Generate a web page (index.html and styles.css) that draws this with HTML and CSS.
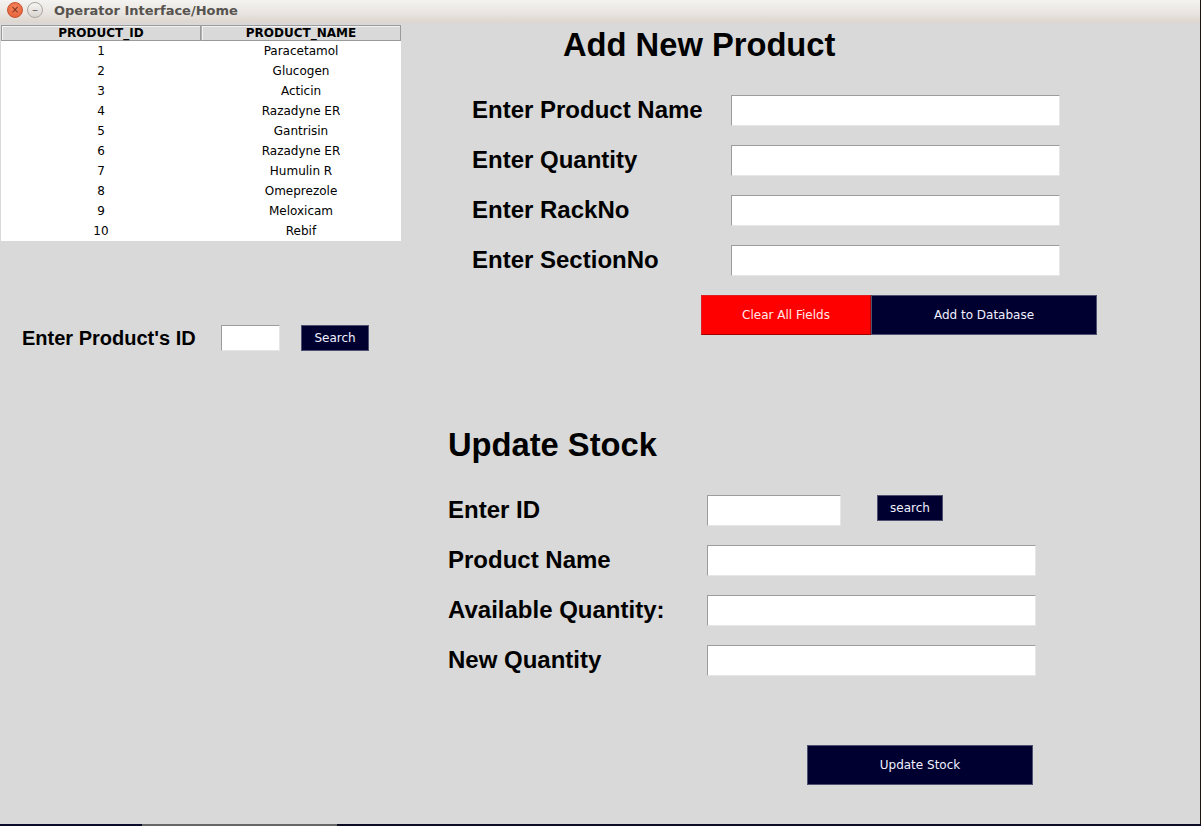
FILE: index.html
```html
<!DOCTYPE html>
<html>
<head>
<meta charset="utf-8">
<title>Operator Interface/Home</title>
<link rel="stylesheet" href="styles.css">
</head>
<body>
<div class="screen">
  <div class="window">
    <div class="titlebar">
      <span class="wbtn wbtn-close">×</span>
      <span class="wbtn wbtn-min">–</span>
      <span class="wtitle">Operator Interface/Home</span>
    </div>
    <div class="main">
      <div class="left">
        <div class="table">
          <div class="thead">
            <div class="th">PRODUCT_ID</div>
            <div class="th">PRODUCT_NAME</div>
          </div>
          <div class="tr"><div class="td">1</div><div class="td">Paracetamol</div></div>
          <div class="tr"><div class="td">2</div><div class="td">Glucogen</div></div>
          <div class="tr"><div class="td">3</div><div class="td">Acticin</div></div>
          <div class="tr"><div class="td">4</div><div class="td">Razadyne ER</div></div>
          <div class="tr"><div class="td">5</div><div class="td">Gantrisin</div></div>
          <div class="tr"><div class="td">6</div><div class="td">Razadyne ER</div></div>
          <div class="tr"><div class="td">7</div><div class="td">Humulin R</div></div>
          <div class="tr"><div class="td">8</div><div class="td">Omeprezole</div></div>
          <div class="tr"><div class="td">9</div><div class="td">Meloxicam</div></div>
          <div class="tr"><div class="td">10</div><div class="td">Rebif</div></div>
        </div>
        <div class="idsearch">
          <span class="label id-label">Enter Product's ID</span>
          <span class="entry entry-id"></span>
          <span class="btn btn-navy btn-search">Search</span>
        </div>
      </div>
      <div class="right">
        <section class="add">
          <h1 class="heading heading-add">Add New Product</h1>
          <div class="form">
            <span class="label">Enter Product Name</span><span class="entry entry-wide"></span>
            <span class="label">Enter Quantity</span><span class="entry entry-wide"></span>
            <span class="label">Enter RackNo</span><span class="entry entry-wide"></span>
            <span class="label">Enter SectionNo</span><span class="entry entry-wide"></span>
          </div>
          <div class="btnrow">
            <span class="btn btn-red btn-clear">Clear All Fields</span>
            <span class="btn btn-navy btn-add">Add to Database</span>
          </div>
        </section>
        <section class="update">
          <h1 class="heading heading-update">Update Stock</h1>
          <div class="form">
            <span class="label">Enter ID</span>
            <span class="idcell"><span class="entry entry-short"></span><span class="btn btn-navy btn-small">search</span></span>
            <span class="label">Product Name</span><span class="entry entry-wide"></span>
            <span class="label">Available Quantity:</span><span class="entry entry-wide"></span>
            <span class="label">New Quantity</span><span class="entry entry-wide"></span>
          </div>
          <div class="btnrow btnrow-update">
            <span class="btn btn-navy btn-update">Update Stock</span>
          </div>
        </section>
      </div>
    </div>
  </div>
  <div class="taskstrip">
    <span class="seg seg-a"></span>
    <span class="seg seg-b"></span>
    <span class="seg seg-c"></span>
  </div>
</div>
</body>
</html>
```

FILE: styles.css
```css
html, body {
  margin: 0;
  padding: 0;
  background: #1b1612;
}
.screen {
  width: 1201px;
  height: 826px;
  overflow: hidden;
  background: #1b1612;
}
.window {
  width: 1200px;
  height: 824px;
  background: #d9d9d9;
  overflow: hidden;
}
.titlebar {
  height: 23px;
  box-sizing: border-box;
  display: flex;
  align-items: center;
  background: linear-gradient(#f4f3f1, #e9e5e1 55%, #ddd5ce);
  padding-left: 7px;
  padding-bottom: 3px;
}
.wbtn {
  width: 16px;
  height: 16px;
  border-radius: 50%;
  box-sizing: border-box;
  display: flex;
  align-items: center;
  justify-content: center;
  font-family: "DejaVu Sans", sans-serif;
  line-height: 1;
}
.wbtn-close {
  background: radial-gradient(circle at 50% 35%, #f6865f, #e35a32);
  border: 1px solid #c7532f;
  color: #7a2c18;
  font-size: 10px;
}
.wbtn-min {
  margin-left: 4px;
  background: linear-gradient(#f7f6f4, #d8d4cf);
  border: 1px solid #a9a49e;
  color: #6a6560;
  font-size: 12px;
}
.wtitle {
  margin-left: 11px;
  font-family: "DejaVu Sans", sans-serif;
  font-weight: bold;
  font-size: 13px;
  color: #57534e;
}
.main {
  display: flex;
}
.left {
  width: 401px;
  flex: none;
}
.table {
  margin-top: 2px;
  margin-left: 1px;
  width: 400px;
  background: #ffffff;
  font-family: "DejaVu Sans", sans-serif;
  font-size: 12px;
  color: #000;
}
.thead {
  display: flex;
  height: 16px;
}
.th {
  width: 200px;
  box-sizing: border-box;
  background: #d9d9d9;
  border: 1px solid #9a9a9a;
  box-shadow: inset 1px 1px 0 #f2f2f2;
  text-align: center;
  font-weight: bold;
  line-height: 14px;
}
.th + .th {
  border-left: 1px solid #b0b0b0;
}
.tr {
  display: flex;
  height: 20px;
  line-height: 20px;
}
.td {
  width: 200px;
  text-align: center;
}
.idsearch {
  margin-top: 84px;
  display: flex;
  align-items: center;
  height: 26px;
  padding-left: 22px;
}
.label {
  font-family: "Liberation Sans", Arial, sans-serif;
  font-weight: bold;
  font-size: 24px;
  color: #000;
}
.id-label {
  font-size: 20px;
  width: 199px;
}
.entry {
  display: block;
  box-sizing: border-box;
  background: #fff;
  border-top: 1px solid #9c9c9c;
  border-left: 1px solid #9c9c9c;
  border-right: 1px solid #e6e6e6;
  border-bottom: 1px solid #e6e6e6;
  height: 31px;
}
.entry-id {
  width: 59px;
  height: 26px;
}
.entry-wide {
  width: 329px;
}
.entry-short {
  width: 134px;
}
.btn {
  display: flex;
  align-items: center;
  justify-content: center;
  box-sizing: border-box;
  font-family: "DejaVu Sans", sans-serif;
  font-size: 12px;
  color: #f0f0ff;
}
.btn-navy {
  background: #000030;
  border: 1px solid #4f4f72;
}
.btn-red {
  background: #ff0000;
  border: 1px solid #e02020;
  border-bottom-color: #a00000;
  border-right-color: #b00000;
  color: #ffe8e8;
}
.btn-search {
  margin-left: 21px;
  width: 68px;
  height: 26px;
}
.right {
  flex: 1;
}
.heading {
  margin: 0;
  height: 40px;
  line-height: 40px;
  font-family: "Liberation Sans", Arial, sans-serif;
  font-weight: bold;
  font-size: 32.7px;
  color: #000;
}
.heading-add {
  margin-top: 2px;
  padding-left: 162px;
}
.form {
  margin-top: 20px;
  display: grid;
  grid-template-columns: 259px auto;
  grid-auto-rows: 50px;
  align-items: center;
}
.add .form {
  padding-left: 71px;
}
.btnrow {
  display: flex;
  margin-top: 10px;
  padding-left: 300px;
  height: 40px;
}
.btn-clear {
  width: 170px;
}
.btn-add {
  width: 226px;
}
.update {
  margin-top: 90px;
}
.heading-update {
  padding-left: 47px;
}
.update .form {
  padding-left: 47px;
}
.idcell {
  display: flex;
  align-items: flex-start;
  height: 31px;
}
.btn-small {
  margin-left: 36px;
  width: 66px;
  height: 26px;
}
.btnrow-update {
  margin-top: 60px;
  padding-left: 406px;
}
.btn-update {
  width: 226px;
}
.taskstrip {
  display: flex;
  height: 2px;
}
.seg {
  display: block;
  height: 2px;
}
.seg-a {
  width: 142px;
  background: #0a0a2a;
}
.seg-b {
  width: 195px;
  background: #666666;
}
.seg-c {
  flex: 1;
  background: #0c0c24;
}
```
